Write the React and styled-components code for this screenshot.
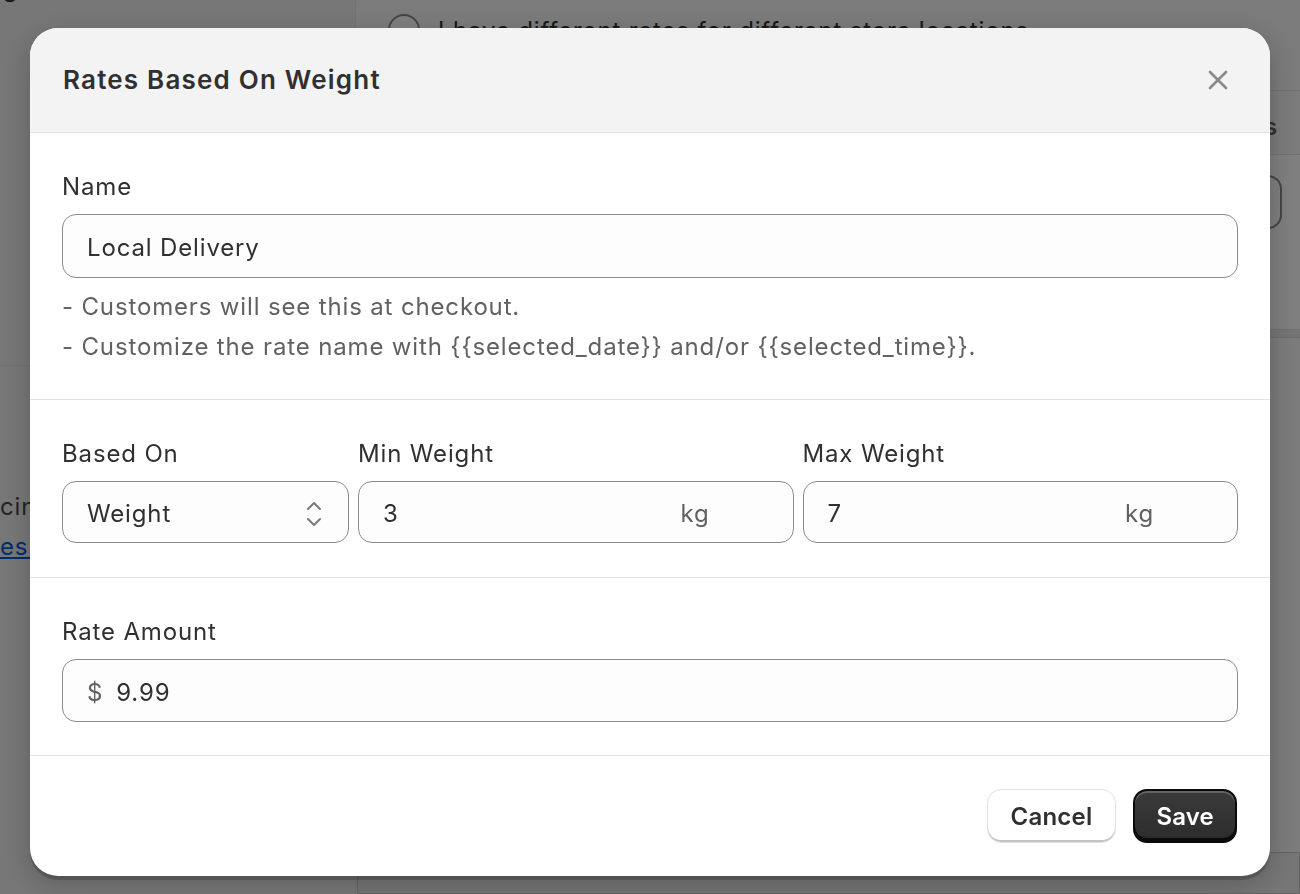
import React from 'react'
import styled, { createGlobalStyle } from 'styled-components'

const GlobalStyle = createGlobalStyle`
	html, body {
		margin: 0;
		padding: 0;
		overflow: hidden;
	}
	body {
		font-family: Inter, "Noto Sans", "Liberation Sans", sans-serif;
		color: #303030;
		letter-spacing: 0.85px;
		-webkit-font-smoothing: antialiased;
	}
	* { box-sizing: border-box; }
`

// ---- page behind the modal ----

const Page = styled.div`
	display: grid;
	grid-template-columns: 356px 1fr;
	width: 1300px;
	height: 894px;
	overflow: hidden;
	background: #f6f6f6;
`

const Sidebar = styled.aside`
	background: #efefef;
	border-right: 1px solid #e3e3e3;
	font-size: 24px;
	line-height: 40px;
	color: #303030;
	overflow: hidden;
`

const SideTitle = styled.div`
	margin: -31px 0 0 -88px;
	white-space: nowrap;
`

const SideBlock = styled.div`
	margin-top: 356px;
	border-top: 1px solid #e3e3e3;
	padding-top: 121px;
`

const SideNote = styled.p`
	margin: 0;
	color: #4a4a4a;
	white-space: nowrap;
`

const SideLink = styled.a`
	display: block;
	color: #005bd3;
	text-decoration: underline;
	white-space: nowrap;
`

const Main = styled.main`
	display: flex;
	flex-direction: column;
	padding: 14px 0 0 32px;
	font-size: 24px;
	overflow: hidden;
`

const RadioRow = styled.label`
	display: flex;
	align-items: center;
	gap: 18px;
	height: 32px;
	color: #303030;
`

const Radio = styled.span`
	width: 32px;
	height: 32px;
	border-radius: 50%;
	border: 2px solid #8a8a8a;
	background: #fff;
`

const Card = styled.section`
	margin: 44px 0 0 -32px;
	background: #fff;
	border-top: 1px solid #e3e3e3;
`

const CardHead = styled.div`
	display: flex;
	justify-content: flex-end;
	align-items: center;
	height: 64px;
	padding: 8px 22px 0 0;
	background: #f7f7f7;
	border-bottom: 1px solid #e3e3e3;
	font-weight: 600;
	font-size: 24px;
	color: #616161;
`

const CardBody = styled.div`
	display: flex;
	justify-content: flex-end;
	padding: 20px 18px 100px 0;
	border-bottom: 1px solid #e3e3e3;
`

const FakeField = styled.div`
	width: 300px;
	height: 54px;
	border: 2px solid #8a8a8a;
	border-radius: 14px;
	background: #fdfdfd;
`

const Band = styled.div`
	height: 35px;
	margin-left: -32px;
	background: #ebebeb;
	border-bottom: 1px solid #dcdcdc;
`

const BottomCard = styled.section`
	margin: 514px 0 0 -31px;
	height: 200px;
	background: #ececec;
	border: 1px solid #c8c8c8;
	border-radius: 28px 0 0 0;
`

// ---- modal ----

const Backdrop = styled.div`
	position: fixed;
	inset: 0;
	background: rgba(0, 0, 0, 0.5);
	display: flex;
	justify-content: center;
	align-items: flex-start;
	padding-top: 28px;
`

const Dialog = styled.div`
	width: 1240px;
	height: 848px;
	background: #fff;
	border-radius: 28px;
	overflow: hidden;
	display: flex;
	flex-direction: column;
	box-shadow: 0 4px 0 rgba(0, 0, 0, 0.18), 0 8px 28px rgba(0, 0, 0, 0.22);
`

const Header = styled.header`
	display: flex;
	align-items: center;
	justify-content: space-between;
	height: 105px;
	padding: 0 32px 1px 33px;
	background: #f3f3f3;
	border-bottom: 1px solid #e3e3e3;
`

const Title = styled.h2`
	margin: 0;
	font-size: 26px;
	font-weight: 600;
	letter-spacing: 1.2px;
	color: #303030;
`

const CloseButton = styled.button`
	display: flex;
	align-items: center;
	justify-content: center;
	width: 40px;
	height: 40px;
	padding: 0;
	border: none;
	background: transparent;
	cursor: pointer;
`

const Section = styled.div`
	padding: 34px 32px ${p => p.$padBottom || 32}px 32px;
	border-bottom: ${p => (p.$last ? 'none' : '1px solid #e3e3e3')};
`

const Label = styled.div`
	font-size: 24px;
	line-height: 40px;
	margin-bottom: 7px;
	color: #303030;
`

const Field = styled.div`
	display: flex;
	align-items: center;
	height: ${p => p.$height || 64}px;
	padding: 3px ${p => p.$padRight || 24}px 0 24px;
	border: 1px solid #8a8a8a;
	border-radius: 14px;
	background: #fdfdfd;
	font-size: 24px;
	color: #303030;
`

const Value = styled.span`
	flex: 1;
`

const Prefix = styled.span`
	color: #616161;
	margin-right: 13px;
`

const Suffix = styled.span`
	color: #616161;
`

const Help = styled.div`
	margin-top: 9px;
	font-size: 24px;
	line-height: 40px;
	color: #616161;
`

const Row = styled.div`
	display: grid;
	grid-template-columns: 287px 1fr 1fr;
	gap: 9px;
`

const Footer = styled.footer`
	display: flex;
	justify-content: flex-end;
	gap: 17px;
	padding: 33px 33px 0 32px;
	border-top: 1px solid #e3e3e3;
	flex: 1;
`

const Button = styled.button`
	height: 54px;
	padding: 0 ${p => (p.$primary ? 21 : 23)}px;
	border-radius: 14px;
	font-family: inherit;
	font-size: 24px;
	font-weight: 600;
	letter-spacing: 0.2px;
	cursor: pointer;
	color: ${p => (p.$primary ? '#fff' : '#303030')};
	background: ${p => (p.$primary ? 'linear-gradient(#3a3a3a, #2c2c2c)' : '#fff')};
	border: ${p => (p.$primary ? '2px solid #0a0a0a' : '1.5px solid #e0e0e0')};
	box-shadow: ${p =>
		p.$primary
			? 'inset 0 2px 0 rgba(255,255,255,0.22), inset 0 -3px 0 #0a0a0a'
			: 'inset 0 -2px 0 #c4c4c4'};
`

const Chevrons = () => (
	<svg width="16" height="28" viewBox="0 0 16 28" fill="none" stroke="#7a7a7a" strokeWidth="2" strokeLinecap="round" strokeLinejoin="round">
		<path d="M2 9l6-6 6 6" />
		<path d="M2 19l6 6 6-6" />
	</svg>
)

const CloseIcon = () => (
	<svg width="20" height="20" viewBox="0 0 20 20" stroke="#8a8a8a" strokeWidth="2.6" strokeLinecap="round">
		<path d="M2 2l16 16M18 2L2 18" />
	</svg>
)

export default function App() {
	return (
		<>
			<GlobalStyle />
			<Page>
				<Sidebar>
					<SideTitle>Shipping</SideTitle>
					<SideBlock>
						<SideNote>cing is based on the rates below</SideNote>
						<SideLink href="#">es Via Apps</SideLink>
					</SideBlock>
				</Sidebar>
				<Main>
					<RadioRow>
						<Radio />
						I have different rates for different store locations
					</RadioRow>
					<Card>
						<CardHead>Conditions</CardHead>
						<CardBody>
							<FakeField />
						</CardBody>
					</Card>
					<Band />
					<BottomCard />
				</Main>
			</Page>

			<Backdrop>
				<Dialog role="dialog" aria-labelledby="rate-title">
					<Header>
						<Title id="rate-title">Rates Based On Weight</Title>
						<CloseButton aria-label="Close">
							<CloseIcon />
						</CloseButton>
					</Header>

					<Section>
						<Label>Name</Label>
						<Field>
							<Value>Local Delivery</Value>
						</Field>
						<Help>
							<div>- Customers will see this at checkout.</div>
							<div>- Customize the rate name with {'{{selected_date}}'} and/or {'{{selected_time}}'}.</div>
						</Help>
					</Section>

					<Section $padBottom={34}>
						<Row>
							<div>
								<Label>Based On</Label>
								<Field $height={62} $padRight={26}>
									<Value>Weight</Value>
									<Chevrons />
								</Field>
							</div>
							<div>
								<Label>Min Weight</Label>
								<Field $height={62} $padRight={83}>
									<Value>3</Value>
									<Suffix>kg</Suffix>
								</Field>
							</div>
							<div>
								<Label>Max Weight</Label>
								<Field $height={62} $padRight={83}>
									<Value>7</Value>
									<Suffix>kg</Suffix>
								</Field>
							</div>
						</Row>
					</Section>

					<Section $last $padBottom={33}>
						<Label>Rate Amount</Label>
						<Field $height={63}>
							<Prefix>$</Prefix>
							<Value>9.99</Value>
						</Field>
					</Section>

					<Footer>
						<Button>Cancel</Button>
						<Button $primary>Save</Button>
					</Footer>
				</Dialog>
			</Backdrop>
		</>
	)
}
